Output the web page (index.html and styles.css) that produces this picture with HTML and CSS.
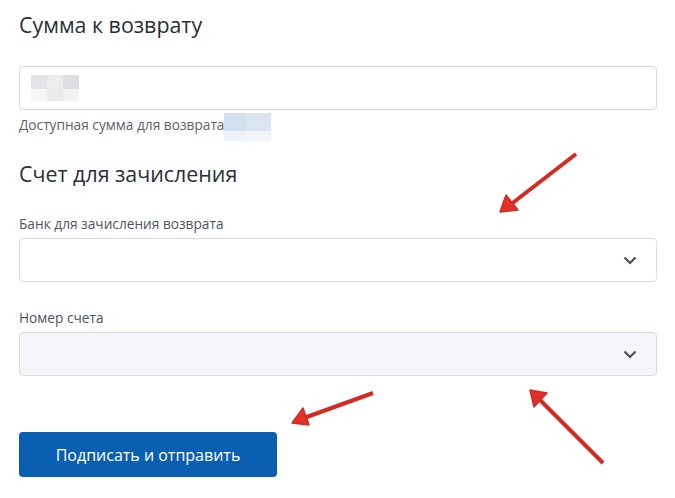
FILE: index.html
```html
<!DOCTYPE html>
<html lang="ru">
<head>
<meta charset="utf-8">
<link rel="stylesheet" href="styles.css">
</head>
<body>
<main class="form">
  <h1 class="title">Сумма к возврату</h1>
  <div class="field amount">
    <span class="blur-gray"><i></i><i></i><i></i><i></i><i></i><i></i></span>
  </div>
  <div class="hint">Доступная сумма для возврата<span class="blur-blue"><i></i><i></i><i></i><i></i></span></div>

  <h2 class="subtitle">Счет для зачисления</h2>
  <label class="label">Банк для зачисления возврата</label>
  <div class="field select">
    <svg class="chev" width="14" height="9" viewBox="0 0 14 9"><path d="M1.5 1.5 L7 7 L12.5 1.5" fill="none" stroke="#4a4f5a" stroke-width="2.2"/></svg>
  </div>

  <label class="label label2">Номер счета</label>
  <div class="field select disabled">
    <svg class="chev" width="14" height="9" viewBox="0 0 14 9"><path d="M1.5 1.5 L7 7 L12.5 1.5" fill="none" stroke="#4a4f5a" stroke-width="2.2"/></svg>
  </div>

  <button class="submit">Подписать и отправить</button>

  <svg class="arrows" width="675" height="498" viewBox="0 0 675 498">
    <defs>
      <filter id="soft" x="-20%" y="-20%" width="140%" height="140%"><feGaussianBlur stdDeviation="0.7"/></filter>
    </defs>
    <g fill="#e0302a" stroke="#d52a24" stroke-linejoin="round" filter="url(#soft)">
      <line x1="576" y1="154" x2="510" y2="205" stroke-width="4"/>
      <polygon points="500,212 506,195 518,210" stroke-width="1.5"/>
      <line x1="373" y1="393" x2="304" y2="418" stroke-width="4"/>
      <polygon points="292,423 303,408 309,425" stroke-width="1.5"/>
      <line x1="603" y1="463" x2="539" y2="399" stroke-width="4"/>
      <polygon points="530,390 547,393 534,407" stroke-width="1.5"/>
    </g>
  </svg>
</main>
</body>
</html>
```

FILE: styles.css
```css
* { box-sizing: border-box; }
html, body { margin: 0; padding: 0; background: #fff; }
body { font-family: "Open Sans", "Noto Sans", sans-serif; color: #2b2e35; width: 675px; height: 498px; overflow: hidden; }
.form { position: relative; padding: 9px 19px 0 19px; width: 675px; height: 498px; display: flex; flex-direction: column; align-items: flex-start; }
.title { font-size: 21.4px; font-weight: 400; line-height: 32px; margin: 0 0 25px 0; color: #2b2e35; }
.field { width: 638px; height: 44px; border: 1px solid #d9dbe0; border-radius: 4px; background: #fff; position: relative; display: flex; align-items: center; }
.amount { padding-left: 11px; }
.blur-gray { display: grid; grid-template-columns: repeat(3, 16px); grid-template-rows: 14px 12px; }
.blur-gray i { display: block; }
.blur-gray i:nth-child(1) { background: #e4e4e6; }
.blur-gray i:nth-child(2) { background: #ececee; }
.blur-gray i:nth-child(3) { background: #dedee0; }
.blur-gray i:nth-child(4) { background: #f6f6f7; }
.blur-gray i:nth-child(5) { background: #ebebed; }
.blur-gray i:nth-child(6) { background: #f3f3f4; }
.hint { font-size: 13.7px; line-height: 18px; color: #5c616b; margin-top: 6px; display: flex; align-items: flex-start; }
.blur-blue { display: grid; grid-template-columns: 22px 25px; grid-template-rows: 18px 10px; margin-top: -3px; }
.blur-blue i:nth-child(1) { background: #d3e0ee; }
.blur-blue i:nth-child(2) { background: #dae5f1; }
.blur-blue i:nth-child(3) { background: #eef3f9; }
.blur-blue i:nth-child(4) { background: #f2f6fb; }
.subtitle { font-size: 21.4px; font-weight: 400; line-height: 28px; margin: 19px 0 0 0; color: #2b2e35; }
.label { font-size: 13.7px; line-height: 18px; color: #4f545e; margin: 27px 0 5px 0; }
.label2 { margin-top: 27px; }
.select { justify-content: flex-end; padding-right: 19px; }
.disabled { background: #f5f6f9; }
.chev { display: block; }
.submit { margin-top: 56px; width: 258px; height: 45px; border: 0; border-radius: 4px; background: #0b5fb2; color: #fff; font-family: "Open Sans", "Noto Sans", sans-serif; font-size: 16px; padding: 0; }
.arrows { position: absolute; left: 0; top: 0; pointer-events: none; }
```
